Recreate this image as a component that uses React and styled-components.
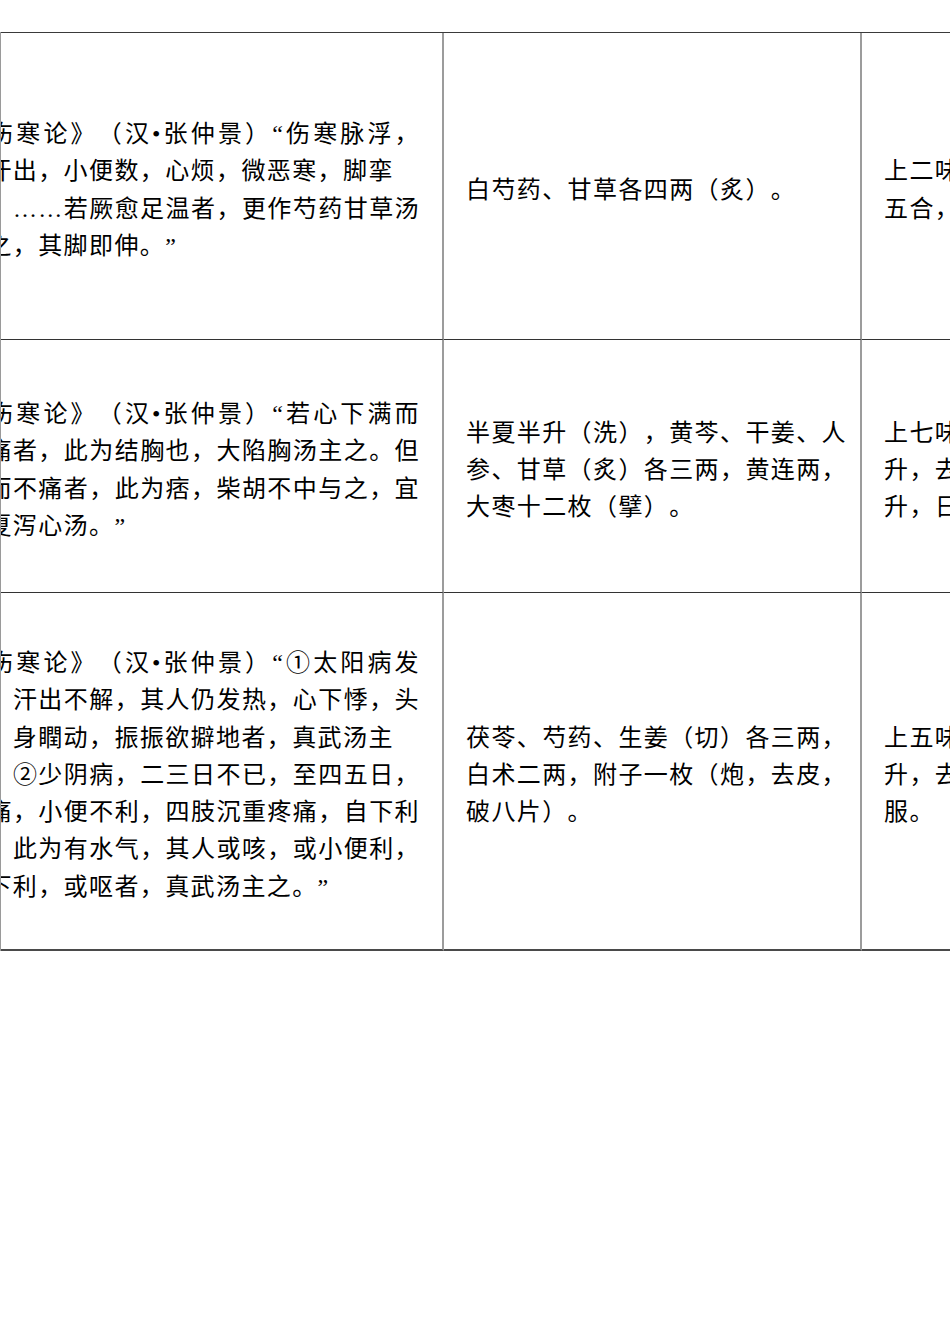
import React from 'react';
import styled, { createGlobalStyle } from 'styled-components';

const GlobalStyle = createGlobalStyle`
  html, body {
    margin: 0;
    padding: 0;
    background: #ffffff;
  }

  body {
    font-family: "Liberation Serif", "Noto Sans CJK SC", serif;
    color: #000000;
  }
`;

const Page = styled.div`
  width: 950px;
  height: 1344px;
  box-sizing: border-box;
  padding-top: 32px;
  overflow: hidden;
  background: #ffffff;
`;

// the sheet is cut off on both sides, so the table is clipped here
const Clip = styled.div`
  border-left: 1px solid #9a9a9a;
  overflow: hidden;
`;

const Table = styled.div`
  display: grid;
  grid-template-columns: 504px 418px 418px;
  width: max-content;
  margin-left: -61px;
  border-top: 1px solid #3a3a3a;
`;

const Cell = styled.div`
  box-sizing: border-box;
  height: ${props => props.$height}px;
  padding: 9px ${props => props.$padRight}px 0 22px;
  border-right: 2px solid #9c9c9c;
  border-bottom: ${props => (props.$last ? '2px solid #4a4a4a' : '1px solid #333333')};
  display: flex;
  flex-direction: column;
  justify-content: center;
  overflow: hidden;
`;

const Line = styled.div`
  font-size: 24px;
  line-height: 37.3px;
  letter-spacing: 1.4px;
  text-spacing-trim: space-all;
  white-space: ${props => (props.$full ? 'normal' : 'nowrap')};
  text-align: ${props => (props.$full ? 'justify' : 'left')};
  text-align-last: ${props => (props.$full ? 'justify' : 'auto')};
`;

// lines marked with a leading '|' fill the whole width
const rows = [
  {
    height: 307,
    cells: [
      [
        '|《伤寒论》（汉•张仲景）“伤寒脉浮，',
        '自汗出，小便数，心烦，微恶寒，脚挛',
        '|急，……若厥愈足温者，更作芍药甘草汤',
        '与之，其脚即伸。”',
      ],
      ['白芍药、甘草各四两（炙）。'],
      ['上二味，以水三升，煮取一升', '五合，去滓，分温再服。'],
    ],
  },
  {
    height: 253,
    cells: [
      [
        '|《伤寒论》（汉•张仲景）“若心下满而',
        '|硬痛者，此为结胸也，大陷胸汤主之。但',
        '|满而不痛者，此为痞，柴胡不中与之，宜',
        '半夏泻心汤。”',
      ],
      ['半夏半升（洗），黄芩、干姜、人', '参、甘草（炙）各三两，黄连两，', '大枣十二枚（擘）。'],
      ['上七味，以水一斗，煮取六', '升，去滓，再煎取三升，温服一', '升，日三服。'],
    ],
  },
  {
    height: 358,
    last: true,
    cells: [
      [
        '|《伤寒论》（汉•张仲景）“①太阳病发',
        '|汗，汗出不解，其人仍发热，心下悸，头',
        '眩，身瞤动，振振欲擗地者，真武汤主',
        '|之。②少阴病，二三日不已，至四五日，',
        '|腹痛，小便不利，四肢沉重疼痛，自下利',
        '|者，此为有水气，其人或咳，或小便利，',
        '或下利，或呕者，真武汤主之。”',
      ],
      ['茯苓、芍药、生姜（切）各三两，', '白术二两，附子一枚（炮，去皮，', '破八片）。'],
      ['上五味，以水八升，煮取三', '升，去滓，温服七合，日三', '服。'],
    ],
  },
];

const padRights = [22, 13, 13];

export default function App() {
  return (
    <>
      <GlobalStyle />
      <Page lang="zh-CN">
        <Clip>
          <Table>
            {rows.map((row, r) =>
              row.cells.map((lines, c) => (
                <Cell
                  key={`${r}-${c}`}
                  $height={row.height}
                  $padRight={padRights[c]}
                  $last={row.last}
                >
                  {lines.map((text, i) => {
                    const full = text.startsWith('|');
                    return (
                      <Line key={i} $full={full}>
                        {full ? text.slice(1) : text}
                      </Line>
                    );
                  })}
                </Cell>
              ))
            )}
          </Table>
        </Clip>
      </Page>
    </>
  );
}
